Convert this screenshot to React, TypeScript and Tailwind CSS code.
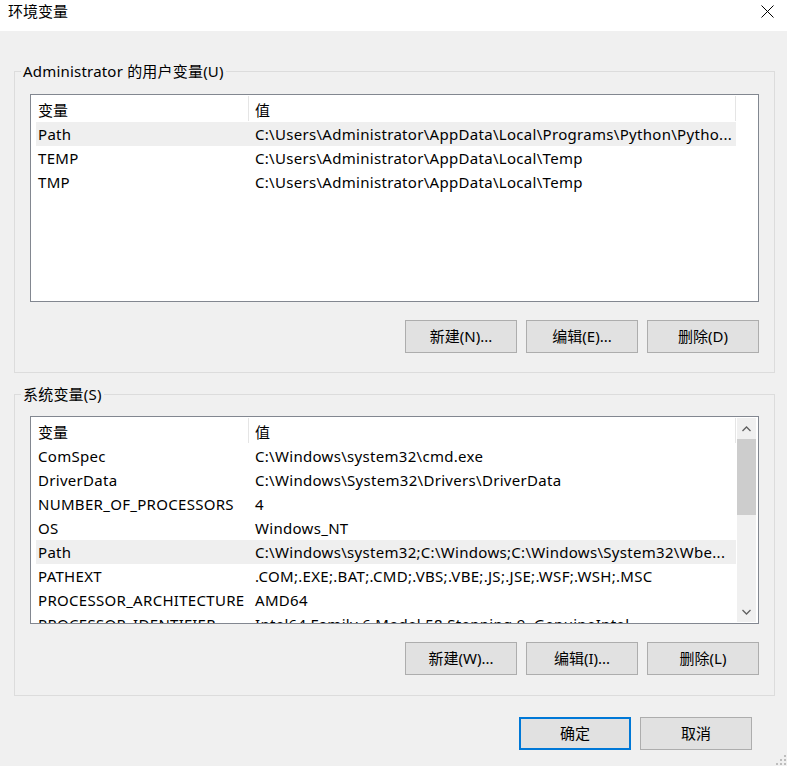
import React from "react";

type Row = { name: string; value: string; selected?: boolean };

const userRows: Row[] = [
  { name: "Path", value: "C:\\Users\\Administrator\\AppData\\Local\\Programs\\Python\\Pytho...", selected: true },
  { name: "TEMP", value: "C:\\Users\\Administrator\\AppData\\Local\\Temp" },
  { name: "TMP", value: "C:\\Users\\Administrator\\AppData\\Local\\Temp" },
];

const sysRows: Row[] = [
  { name: "ComSpec", value: "C:\\Windows\\system32\\cmd.exe" },
  { name: "DriverData", value: "C:\\Windows\\System32\\Drivers\\DriverData" },
  { name: "NUMBER_OF_PROCESSORS", value: "4" },
  { name: "OS", value: "Windows_NT" },
  { name: "Path", value: "C:\\Windows\\system32;C:\\Windows;C:\\Windows\\System32\\Wbe...", selected: true },
  { name: "PATHEXT", value: ".COM;.EXE;.BAT;.CMD;.VBS;.VBE;.JS;.JSE;.WSF;.WSH;.MSC" },
  { name: "PROCESSOR_ARCHITECTURE", value: "AMD64" },
  { name: "PROCESSOR_IDENTIFIER", value: "Intel64 Family 6 Model 58 Stepping 9, GenuineIntel" },
];

function Header() {
  return (
    <div className="flex h-[27px] shrink-0 pl-[5px]">
      <div className="w-[213px] flex items-center pt-[3px] pl-[2px] border-r border-[#e5e5e5] my-[1px]">变量</div>
      <div className="w-[487px] flex items-center pt-[3px] pl-[6px] border-r border-[#e5e5e5] my-[1px]">值</div>
    </div>
  );
}

function Rows({ rows }: { rows: Row[] }) {
  return (
    <div className="flex flex-col pl-[5px] tracking-[0.3px]">
      {rows.map((r, i) => (
        <div
          key={i}
          className={
            "flex h-[24px] w-[700px] shrink-0 items-center whitespace-nowrap " +
            (r.selected ? "bg-[#efefef]" : "")
          }
        >
          <div className="w-[213px] pl-[2px] overflow-hidden">{r.name}</div>
          <div className="w-[487px] pl-[6px] overflow-hidden">{r.value}</div>
        </div>
      ))}
    </div>
  );
}

function Btn({ label, def }: { label: string; def?: boolean }) {
  return (
    <div
      className={
        "w-[112px] h-[33px] flex items-center justify-center bg-[#e1e1e1] " +
        (def ? "border-2 border-[#0078d7]" : "border border-[#adadad]")
      }
    >
      {label}
    </div>
  );
}

function Chevron({ up }: { up?: boolean }) {
  return (
    <svg width="9" height="6" viewBox="0 0 9 6">
      <path
        d={up ? "M0.5 5L4.5 1L8.5 5" : "M0.5 1L4.5 5L8.5 1"}
        fill="none"
        stroke="#606060"
        strokeWidth="1.3"
      />
    </svg>
  );
}

function Group({
  legend,
  children,
  pt,
}: {
  legend: string;
  children: React.ReactNode;
  pt: string;
}) {
  return (
    <div className={"relative border border-[#dcdcdc] h-[302px] pl-[15px] " + pt}>
      <div className="absolute left-[6px] top-[-11px] px-[2px] bg-[#f0f0f0] leading-[20px] tracking-[0.2px]">{legend}</div>
      {children}
    </div>
  );
}

export default function App() {
  return (
    <div className="relative w-[787px] h-[766px] bg-[#f0f0f0] text-[15px] text-black font-['Noto_Sans','Noto_Sans_CJK_SC',sans-serif] overflow-hidden flex flex-col">
      <div className="h-[31px] bg-white flex items-center justify-between pl-[8px] pr-[13px] shrink-0">
        <span className="leading-none pb-[8px]">环境变量</span>
        <svg width="13" height="13" viewBox="0 0 13 13" className="mb-[8px]">
          <path d="M0.5 0.5L12.5 12.5M12.5 0.5L0.5 12.5" stroke="#000" strokeWidth="1" />
        </svg>
      </div>

      <div className="pl-[14px] pr-[12px] pt-[40px] flex flex-col">
        <Group legend="Administrator 的用户变量(U)" pt="pt-[22px]">
          <div className="w-[729px] h-[208px] border border-[#828790] bg-white flex flex-col overflow-hidden">
            <Header />
            <Rows rows={userRows} />
          </div>
          <div className="flex gap-[9px] justify-end w-[729px] mt-[18px]">
            <Btn label="新建(N)..." />
            <Btn label="编辑(E)..." />
            <Btn label="删除(D)" />
          </div>
        </Group>

        <div className="mt-[21px]">
          <Group legend="系统变量(S)" pt="pt-[21px]">
            <div className="w-[729px] h-[208px] border border-[#828790] bg-white flex overflow-hidden">
              <div className="flex flex-col flex-1 overflow-hidden">
                <Header />
                <Rows rows={sysRows} />
              </div>
              <div className="w-[19px] mr-[2px] mt-[1px] mb-[1px] bg-[#f0f0f0] flex flex-col shrink-0">
                <div className="h-[21px] flex items-center justify-center">
                  <Chevron up />
                </div>
                <div className="h-[76px] bg-[#cdcdcd]" />
                <div className="flex-1" />
                <div className="h-[21px] flex items-center justify-center">
                  <Chevron />
                </div>
              </div>
            </div>
            <div className="flex gap-[9px] justify-end w-[729px] mt-[18px]">
              <Btn label="新建(W)..." />
              <Btn label="编辑(I)..." />
              <Btn label="删除(L)" />
            </div>
          </Group>
        </div>

        <div className="flex justify-end gap-[9px] mt-[21px] pr-[23px]">
          <Btn label="确定" def />
          <Btn label="取消" />
        </div>
      </div>

      <svg width="12" height="12" viewBox="0 0 12 12" className="absolute right-0 bottom-0">
        <g fill="#bdbdbd">
          <rect x="9" y="1" width="2" height="2" />
          <rect x="9" y="5" width="2" height="2" />
          <rect x="5" y="5" width="2" height="2" />
          <rect x="9" y="9" width="2" height="2" />
          <rect x="5" y="9" width="2" height="2" />
          <rect x="1" y="9" width="2" height="2" />
        </g>
      </svg>
    </div>
  );
}
